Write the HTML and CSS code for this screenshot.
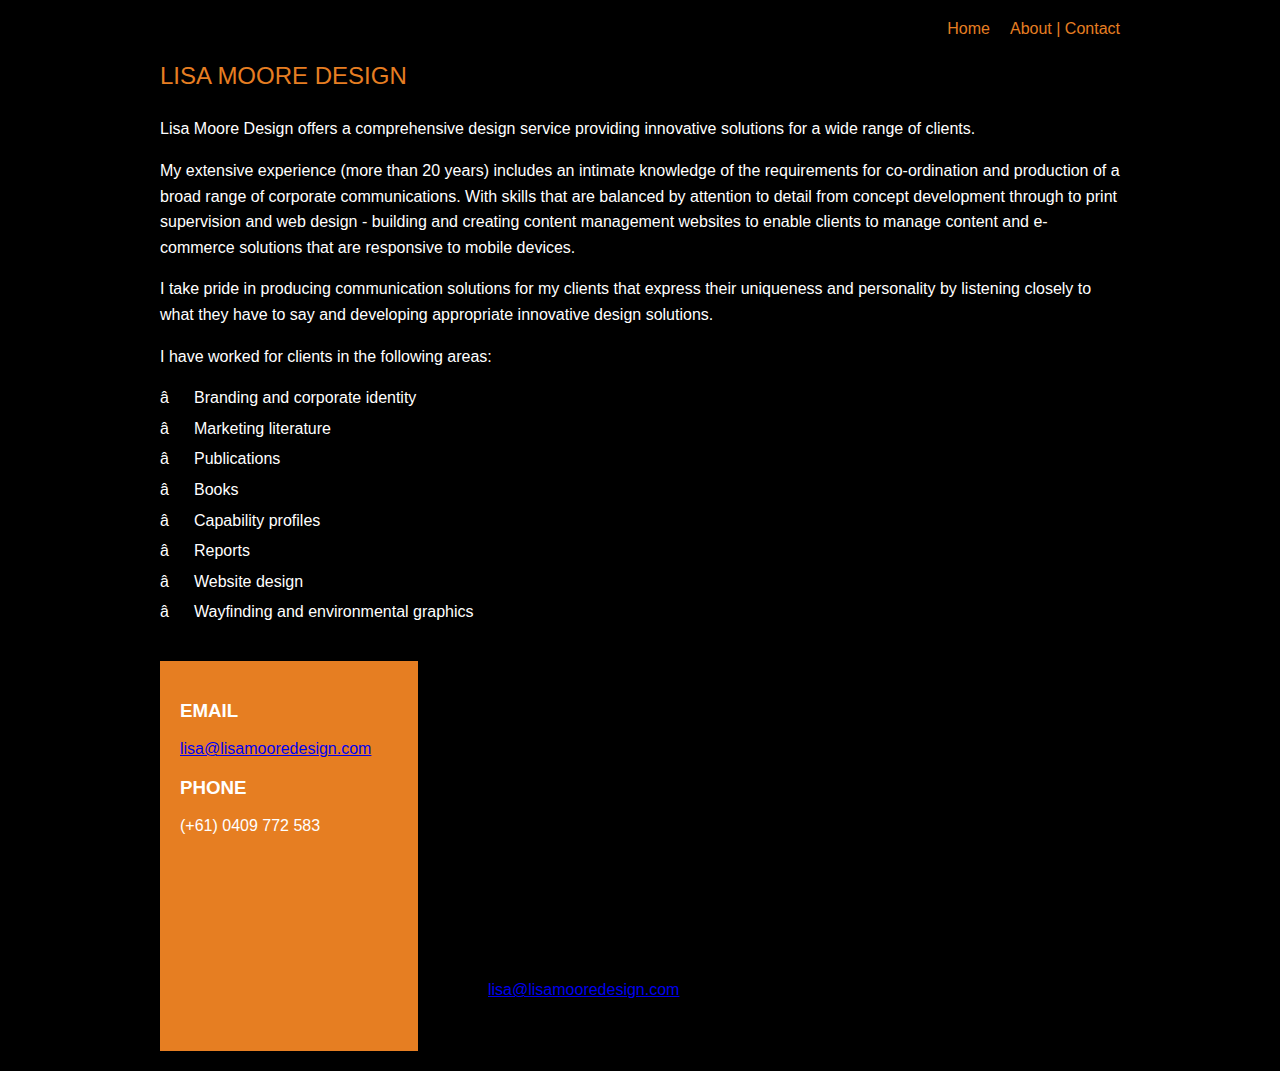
FILE: index.html
```html
<!DOCTYPE html>
<html>
<head>
<meta charset="utf-8">
<title>Lisa Moore Design</title>
<link rel="stylesheet" href="styles.css">
</head>
<body>
<div class="wrap">
  <nav class="nav">
    <a href="#">Home</a>
    <span class="nav-group"><a href="#">About</a> | <a href="#">Contact</a></span>
  </nav>
  <h1 class="title">LISA MOORE DESIGN</h1>
  <p>Lisa Moore Design offers a comprehensive design service providing innovative solutions for a wide range of clients.</p>
  <p>My extensive experience (more than 20 years) includes an intimate knowledge of the requirements for co-ordination and production of a broad range of corporate communications. With skills that are balanced by attention to detail from concept development through to print supervision and web design - building and creating content management websites to enable clients to manage content and e-commerce solutions that are responsive to mobile devices.</p>
  <p>I take pride in producing communication solutions for my clients that express their uniqueness and personality by listening closely to what they have to say and developing appropriate innovative design solutions.</p>
  <p>I have worked for clients in the following areas:</p>
  <ul class="list">
    <li><span class="bul">â</span><span>Branding and corporate identity</span></li>
    <li><span class="bul">â</span><span>Marketing literature</span></li>
    <li><span class="bul">â</span><span>Publications</span></li>
    <li><span class="bul">â</span><span>Books</span></li>
    <li><span class="bul">â</span><span>Capability profiles</span></li>
    <li><span class="bul">â</span><span>Reports</span></li>
    <li><span class="bul">â</span><span>Website design</span></li>
    <li><span class="bul">â</span><span>Wayfinding and environmental graphics</span></li>
  </ul>
  <div class="contact-row">
    <div class="contact-box">
      <h3>EMAIL</h3>
      <p><a class="mail" href="#">lisa@lisamooredesign.com</a></p>
      <h3>PHONE</h3>
      <p>(+61) 0409 772 583</p>
    </div>
    <div class="contact-side">
      <a class="mail" href="#">lisa@lisamooredesign.com</a>
    </div>
  </div>
</div>
</body>
</html>
```
FILE: styles.css
```css
html, body {
  margin: 0;
  padding: 0;
  background: #000;
}
body {
  font-family: "Liberation Sans", Arial, sans-serif;
  font-size: 16px;
  line-height: 1.6;
  color: #fff;
}
.wrap {
  width: 960px;
  margin: 0 auto;
}
.nav {
  display: flex;
  justify-content: flex-end;
  gap: 20px;
  padding-top: 16px;
  color: #e67e22;
}
.nav a {
  color: #e67e22;
  text-decoration: none;
}
.title {
  margin: 20px 0 26px;
  font-size: 24px;
  font-weight: normal;
  line-height: 1.2;
  color: #e67e22;
}
p {
  margin: 0 0 16px;
}
.list {
  list-style: none;
  margin: 0;
  padding: 0;
}
.list li {
  display: flex;
  margin-bottom: 5px;
}
.bul {
  width: 34px;
  flex: none;
}
.contact-row {
  display: flex;
  margin-top: 36px;
  padding-bottom: 20px;
}
.contact-box {
  width: 218px;
  height: 351px;
  padding: 39px 20px 0;
  background: #e67e22;
}
.contact-box h3 {
  margin: 0 0 14px;
  font-size: 18.72px;
  line-height: 1.2;
  font-weight: bold;
}
.contact-box p {
  margin: 0 0 15px;
}
.mail {
  color: #0000ee;
  text-decoration: underline;
}
.contact-side {
  display: flex;
  align-items: flex-end;
  padding-left: 70px;
  padding-bottom: 48px;
}
```
